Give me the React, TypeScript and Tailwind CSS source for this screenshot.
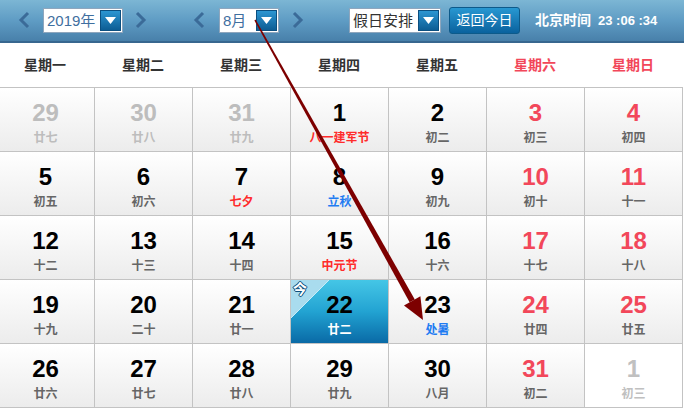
import React from "react";

type Cell = {
  n: string;
  l: string;
  kind?: "other" | "weekend" | "today" | "nextwhite";
  lc?: "red" | "blue";
};

const rows: Cell[][] = [
  [
    { n: "29", l: "廿七", kind: "other" },
    { n: "30", l: "廿八", kind: "other" },
    { n: "31", l: "廿九", kind: "other" },
    { n: "1", l: "八一建军节", lc: "red" },
    { n: "2", l: "初二" },
    { n: "3", l: "初三", kind: "weekend" },
    { n: "4", l: "初四", kind: "weekend" },
  ],
  [
    { n: "5", l: "初五" },
    { n: "6", l: "初六" },
    { n: "7", l: "七夕", lc: "red" },
    { n: "8", l: "立秋", lc: "blue" },
    { n: "9", l: "初九" },
    { n: "10", l: "初十", kind: "weekend" },
    { n: "11", l: "十一", kind: "weekend" },
  ],
  [
    { n: "12", l: "十二" },
    { n: "13", l: "十三" },
    { n: "14", l: "十四" },
    { n: "15", l: "中元节", lc: "red" },
    { n: "16", l: "十六" },
    { n: "17", l: "十七", kind: "weekend" },
    { n: "18", l: "十八", kind: "weekend" },
  ],
  [
    { n: "19", l: "十九" },
    { n: "20", l: "二十" },
    { n: "21", l: "廿一" },
    { n: "22", l: "廿二", kind: "today" },
    { n: "23", l: "处暑", lc: "blue" },
    { n: "24", l: "廿四", kind: "weekend" },
    { n: "25", l: "廿五", kind: "weekend" },
  ],
  [
    { n: "26", l: "廿六" },
    { n: "27", l: "廿七" },
    { n: "28", l: "廿八" },
    { n: "29", l: "廿九" },
    { n: "30", l: "八月" },
    { n: "31", l: "初二", kind: "weekend" },
    { n: "1", l: "初三", kind: "nextwhite" },
  ],
];

const weekdays = ["星期一", "星期二", "星期三", "星期四", "星期五", "星期六", "星期日"];

function ChevronLeft() {
  return (
    <svg width="12" height="18" viewBox="0 0 12 18" className="shrink-0">
      <path d="M10 2 L3 9 L10 16" fill="none" stroke="#3b6b98" strokeWidth="3" />
    </svg>
  );
}
function ChevronRight() {
  return (
    <svg width="12" height="18" viewBox="0 0 12 18" className="shrink-0">
      <path d="M2 2 L9 9 L2 16" fill="none" stroke="#3b6b98" strokeWidth="3" />
    </svg>
  );
}

function DropBtn() {
  return (
    <div className="w-[21px] h-[21px] border border-[#0b4f80] bg-gradient-to-b from-[#2c96d2] to-[#0c5d94] flex items-center justify-center shrink-0">
      <svg width="11" height="7" viewBox="0 0 11 7">
        <path d="M0 0 H11 L5.5 7 Z" fill="#ffffff" />
      </svg>
    </div>
  );
}

function Select({ text, width, dark }: { text: string; width: string; dark?: boolean }) {
  return (
    <div
      className={`${width} h-[25px] bg-white border border-[#8ea6bd] flex items-center justify-between pl-[3px] pr-[1px] shrink-0`}
    >
      <span
        className={`text-[15px] leading-none ${dark ? "text-[#333333]" : "text-[#3f6f9f]"}`}
      >
        {text}
      </span>
      <DropBtn />
    </div>
  );
}

function DayCell({ c }: { c: Cell }) {
  let bg = "bg-gradient-to-b from-white to-[#ececec]";
  let numColor = "text-black";
  let lunarColor = "text-[#666666]";
  if (c.kind === "other") {
    numColor = "text-[#bdbdbd]";
    lunarColor = "text-[#bdbdbd]";
  } else if (c.kind === "weekend") {
    numColor = "text-[#f2475a]";
  } else if (c.kind === "today") {
    bg = "bg-gradient-to-b from-[#44c6e6] via-[#22a3d2] to-[#0a6aa6]";
    lunarColor = "text-white";
  } else if (c.kind === "nextwhite") {
    bg = "bg-white";
    numColor = "text-[#c0c0c0]";
    lunarColor = "text-[#c0c0c0]";
  }
  if (c.lc === "red") lunarColor = "text-[#ff2b2b]";
  if (c.lc === "blue") lunarColor = "text-[#1f7cf2]";
  return (
    <div className={`relative h-[64px] border-l border-t border-[#c3c3c3] ${bg} flex flex-col items-center pt-[13px]`}>
      {c.kind === "today" && (
        <>
          <svg width="38" height="38" viewBox="0 0 38 38" className="absolute left-0 top-0">
            <path d="M0 0 H38 L0 38 Z" fill="#a9dcee" />
            <path d="M38 0 L0 38" stroke="#c8ecf7" strokeWidth="1" />
          </svg>
          <span className="absolute left-[2px] top-[1px] text-[14px] leading-[16px] font-bold text-white [text-shadow:0_0_1px_#0a4f7e,1px_0_0_#0a4f7e,-1px_0_0_#0a4f7e,0_1px_0_#0a4f7e,0_-1px_0_#0a4f7e]">
            今
          </span>
        </>
      )}
      <span className={`relative text-[24px] leading-[24px] font-bold ${numColor}`}>{c.n}</span>
      <span className={`relative mt-[6px] text-[12px] leading-[14px] font-bold ${lunarColor}`}>{c.l}</span>
    </div>
  );
}

export default function App() {
  return (
    <div
      className="relative w-[684px] h-[408px] overflow-hidden bg-white"
      style={{ fontFamily: '"Liberation Sans", "Noto Sans CJK SC", sans-serif' }}
    >
      {/* Header */}
      <div className="h-[43px] bg-gradient-to-b from-[#7cb6d4] via-[#5f9cc4] to-[#4880aa] border-b-2 border-[#37678f] flex items-center pb-[1px]">
        <div className="ml-[18px]">
          <ChevronLeft />
        </div>
        <div className="ml-[13px]">
          <Select text="2019年" width="w-[80px]" />
        </div>
        <div className="ml-[12px]">
          <ChevronRight />
        </div>
        <div className="ml-[46px]">
          <ChevronLeft />
        </div>
        <div className="ml-[14px]">
          <Select text="8月" width="w-[60px]" />
        </div>
        <div className="ml-[13px]">
          <ChevronRight />
        </div>
        <div className="ml-[45px]">
          <Select text="假日安排" width="w-[92px]" dark />
        </div>
        <div className="ml-[8px] w-[71px] h-[27px] rounded-[3px] border border-[#0d5a8a] bg-gradient-to-b from-[#2898d2] to-[#0a629e] flex items-center justify-center text-white text-[14px] leading-none">
          返回今日
        </div>
        <div className="ml-[15px] flex items-center text-white font-bold">
          <span className="text-[14px] leading-none">北京时间</span>
          <span className="ml-[7px] text-[13px] leading-none">23 :06 :34</span>
        </div>
      </div>

      {/* Weekdays */}
      <div className="ml-[-4px] grid grid-cols-[repeat(7,98px)] h-[44px]">
        {weekdays.map((w, i) => (
          <div
            key={w}
            className={`flex items-center justify-center text-[14px] font-bold ${i >= 5 ? "text-[#f2475a]" : "text-[#333333]"}`}
          >
            {w}
          </div>
        ))}
      </div>

      {/* Grid */}
      <div className="ml-[-4px] w-[687px] grid grid-cols-[repeat(7,98px)] border-r border-b border-[#c3c3c3]">
        {rows.flat().map((c, i) => (
          <DayCell key={i} c={c} />
        ))}
      </div>

      {/* Arrow overlay */}
      <svg
        className="absolute left-0 top-0 pointer-events-none"
        width="684"
        height="408"
        viewBox="0 0 684 408"
      >
        <polygon points="254.4,20.4 255.6,19.6 414.8,299.4 409.6,302.3" fill="#7d0000" />
        <polygon points="423,320 404.0,305.4 420.4,296.2" fill="#7d0000" />
      </svg>
    </div>
  );
}
